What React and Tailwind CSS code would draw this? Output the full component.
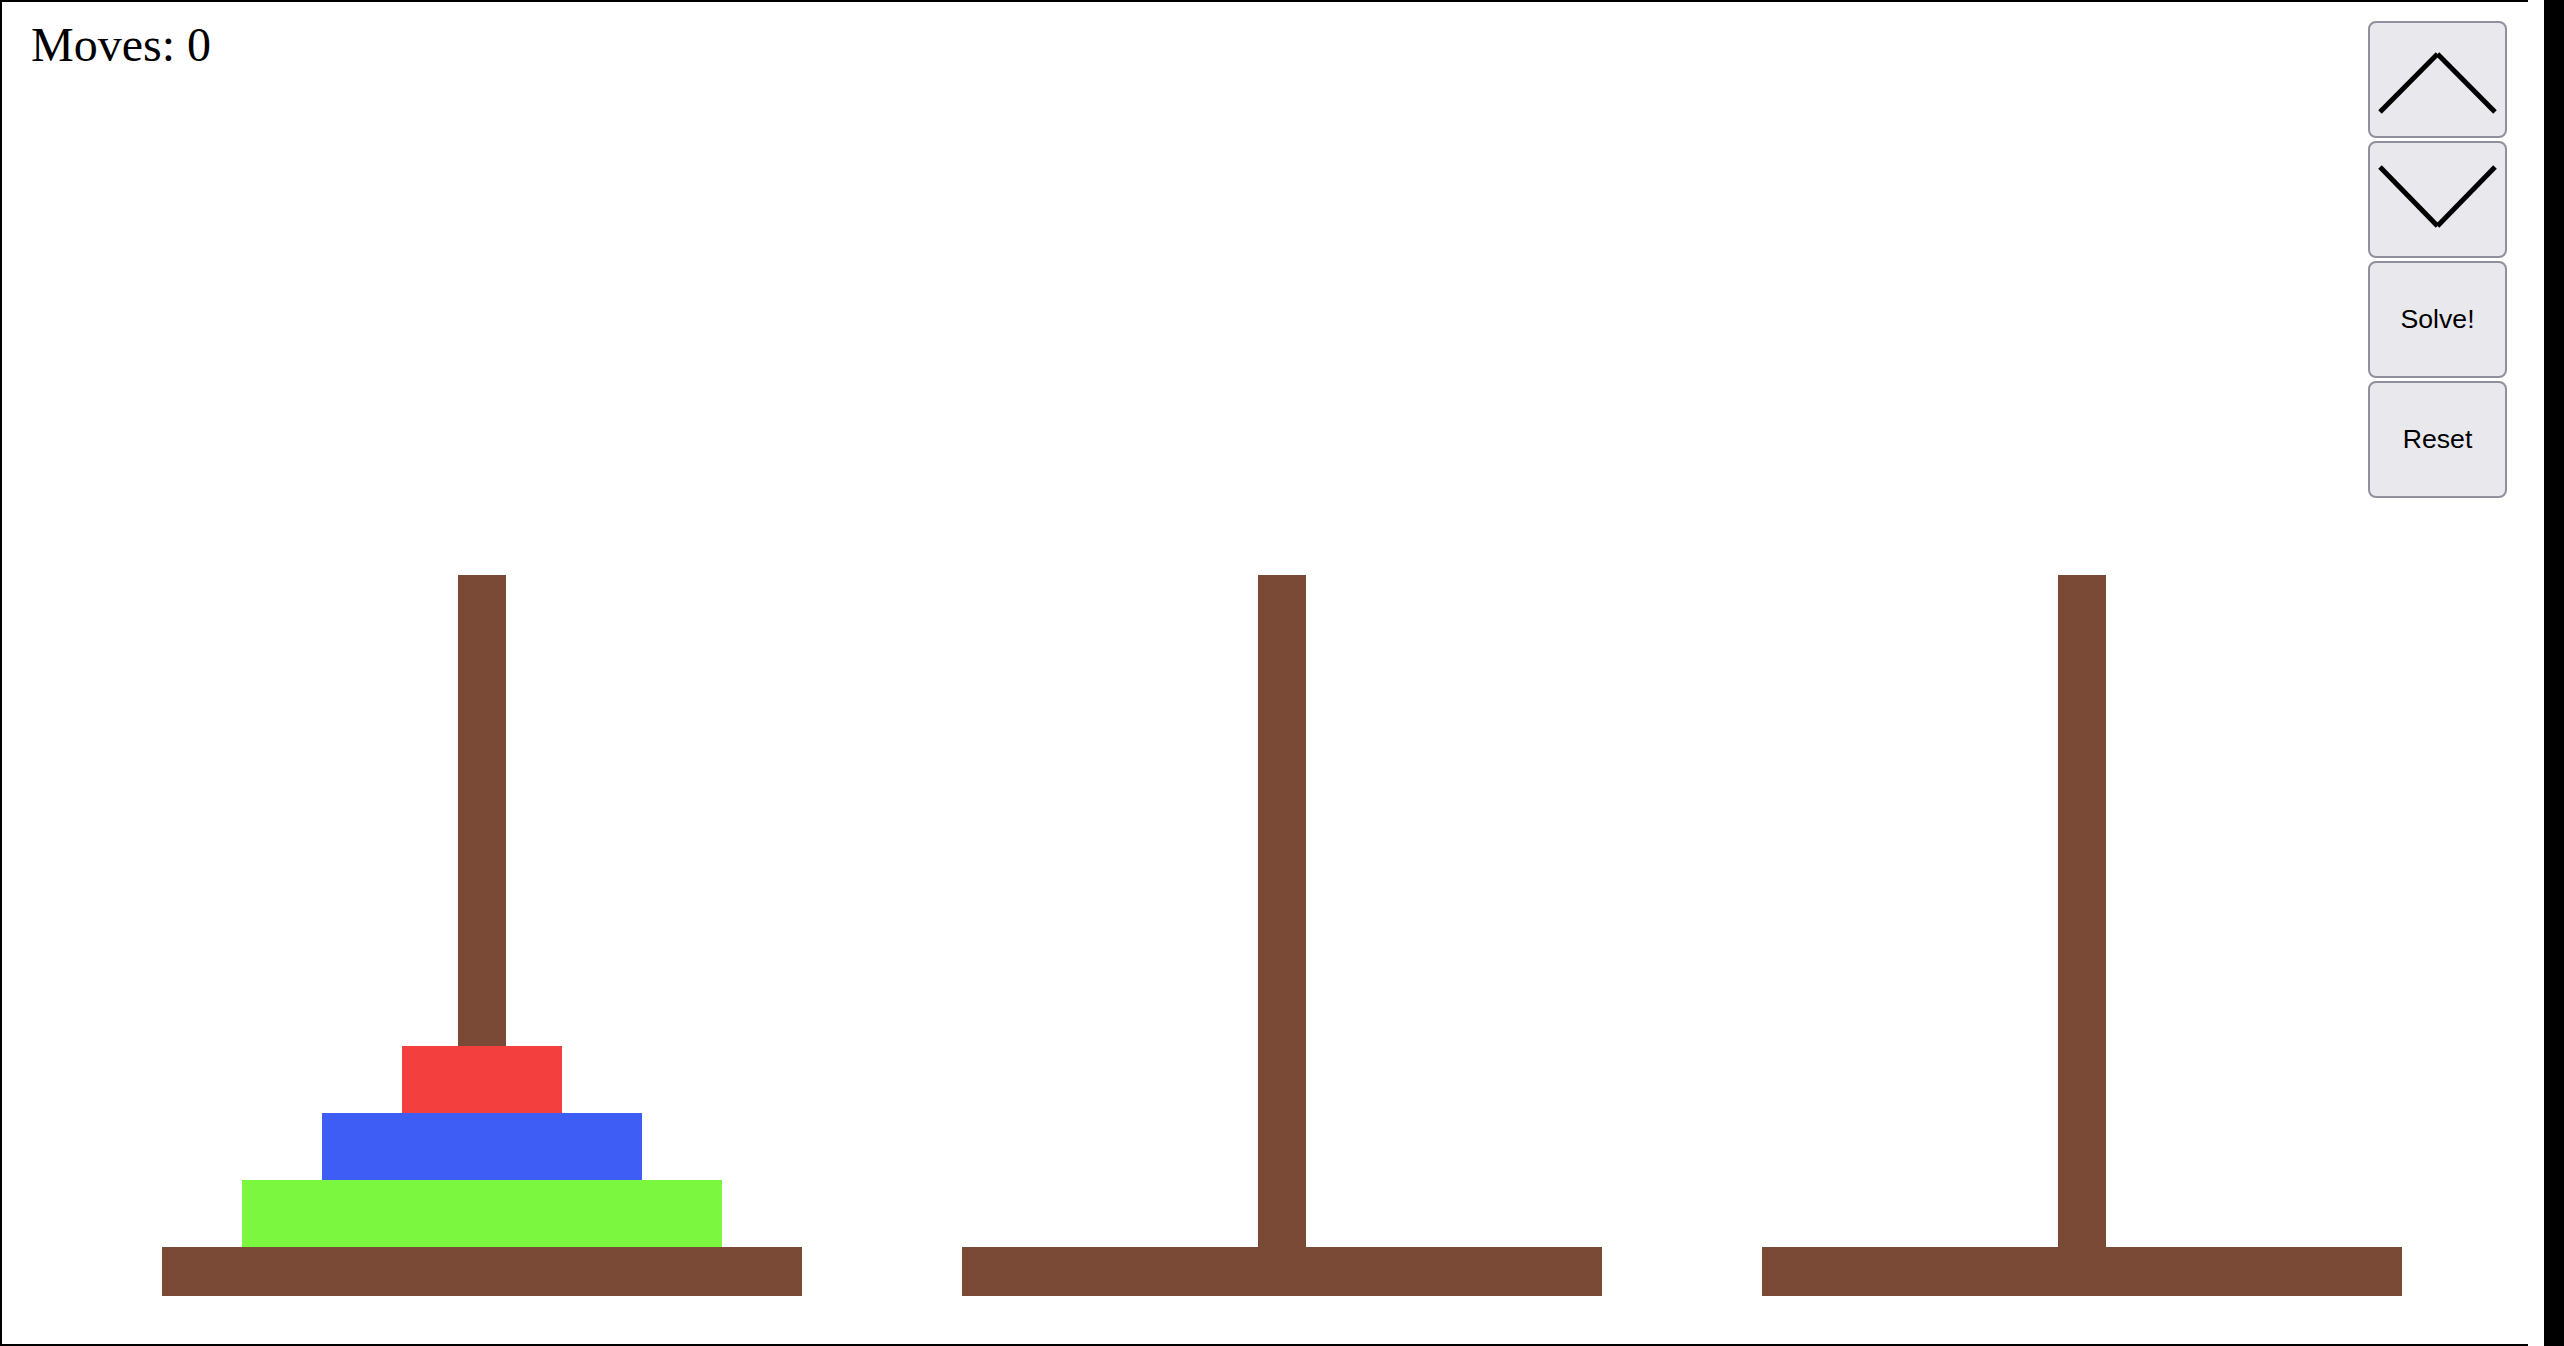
import React from "react";

const disks = [
  { w: "w-[160px]", c: "bg-[#f43f3f]" },
  { w: "w-[320px]", c: "bg-[#3e5df5]" },
  { w: "w-[480px]", c: "bg-[#7bf73f]" },
];

function Tower({ withDisks }) {
  return (
    <div className="w-[640px] flex flex-col items-center">
      <div className="relative w-full h-[672px] flex flex-col justify-end items-center">
        <div className="absolute top-0 bottom-0 left-[296px] w-[48px] bg-[#7b4a36]" />
        {withDisks &&
          disks.map((d, i) => (
            <div key={i} className={`relative h-[67px] ${d.w} ${d.c}`} />
          ))}
      </div>
      <div className="w-full h-[49px] bg-[#7b4a36]" />
    </div>
  );
}

function Btn({ children }) {
  return (
    <button className="w-[139px] h-[117px] border-2 border-[#8f8f9d] rounded-[8px] bg-[#e9e9ed] flex items-center justify-center text-black text-[26.67px] leading-none font-['Liberation_Sans',Arial,sans-serif] p-0">
      {children}
    </button>
  );
}

export default function App() {
  return (
    <div className="w-[2564px] h-[1346px] bg-black overflow-hidden">
      <div className="w-[2544px] h-[1346px] bg-white">
        <div className="relative w-[2528px] h-[1346px] border-l-2 border-t-2 border-b-2 border-black flex flex-col">
          <div className="pt-[7px] pl-[29px] text-[48px] leading-normal text-black font-['Liberation_Serif','Times_New_Roman',serif]">
            Moves: 0
          </div>
          <div className="mt-auto mb-[48px] pl-[160px] flex gap-[160px]">
            <Tower withDisks />
            <Tower />
            <Tower />
          </div>
          <div className="absolute top-[19px] right-[21px] flex flex-col gap-[3px]">
            <Btn>
              <svg width="135" height="113" viewBox="0 0 135 113">
                <line x1="10" y1="89" x2="67.5" y2="31" stroke="black" strokeWidth="5" />
                <line x1="67.5" y1="31" x2="125" y2="89" stroke="black" strokeWidth="5" />
              </svg>
            </Btn>
            <Btn>
              <svg width="135" height="113" viewBox="0 0 135 113">
                <line x1="10" y1="24" x2="67.5" y2="83" stroke="black" strokeWidth="5" />
                <line x1="67.5" y1="83" x2="125" y2="24" stroke="black" strokeWidth="5" />
              </svg>
            </Btn>
            <Btn>Solve!</Btn>
            <Btn>Reset</Btn>
          </div>
        </div>
      </div>
    </div>
  );
}
